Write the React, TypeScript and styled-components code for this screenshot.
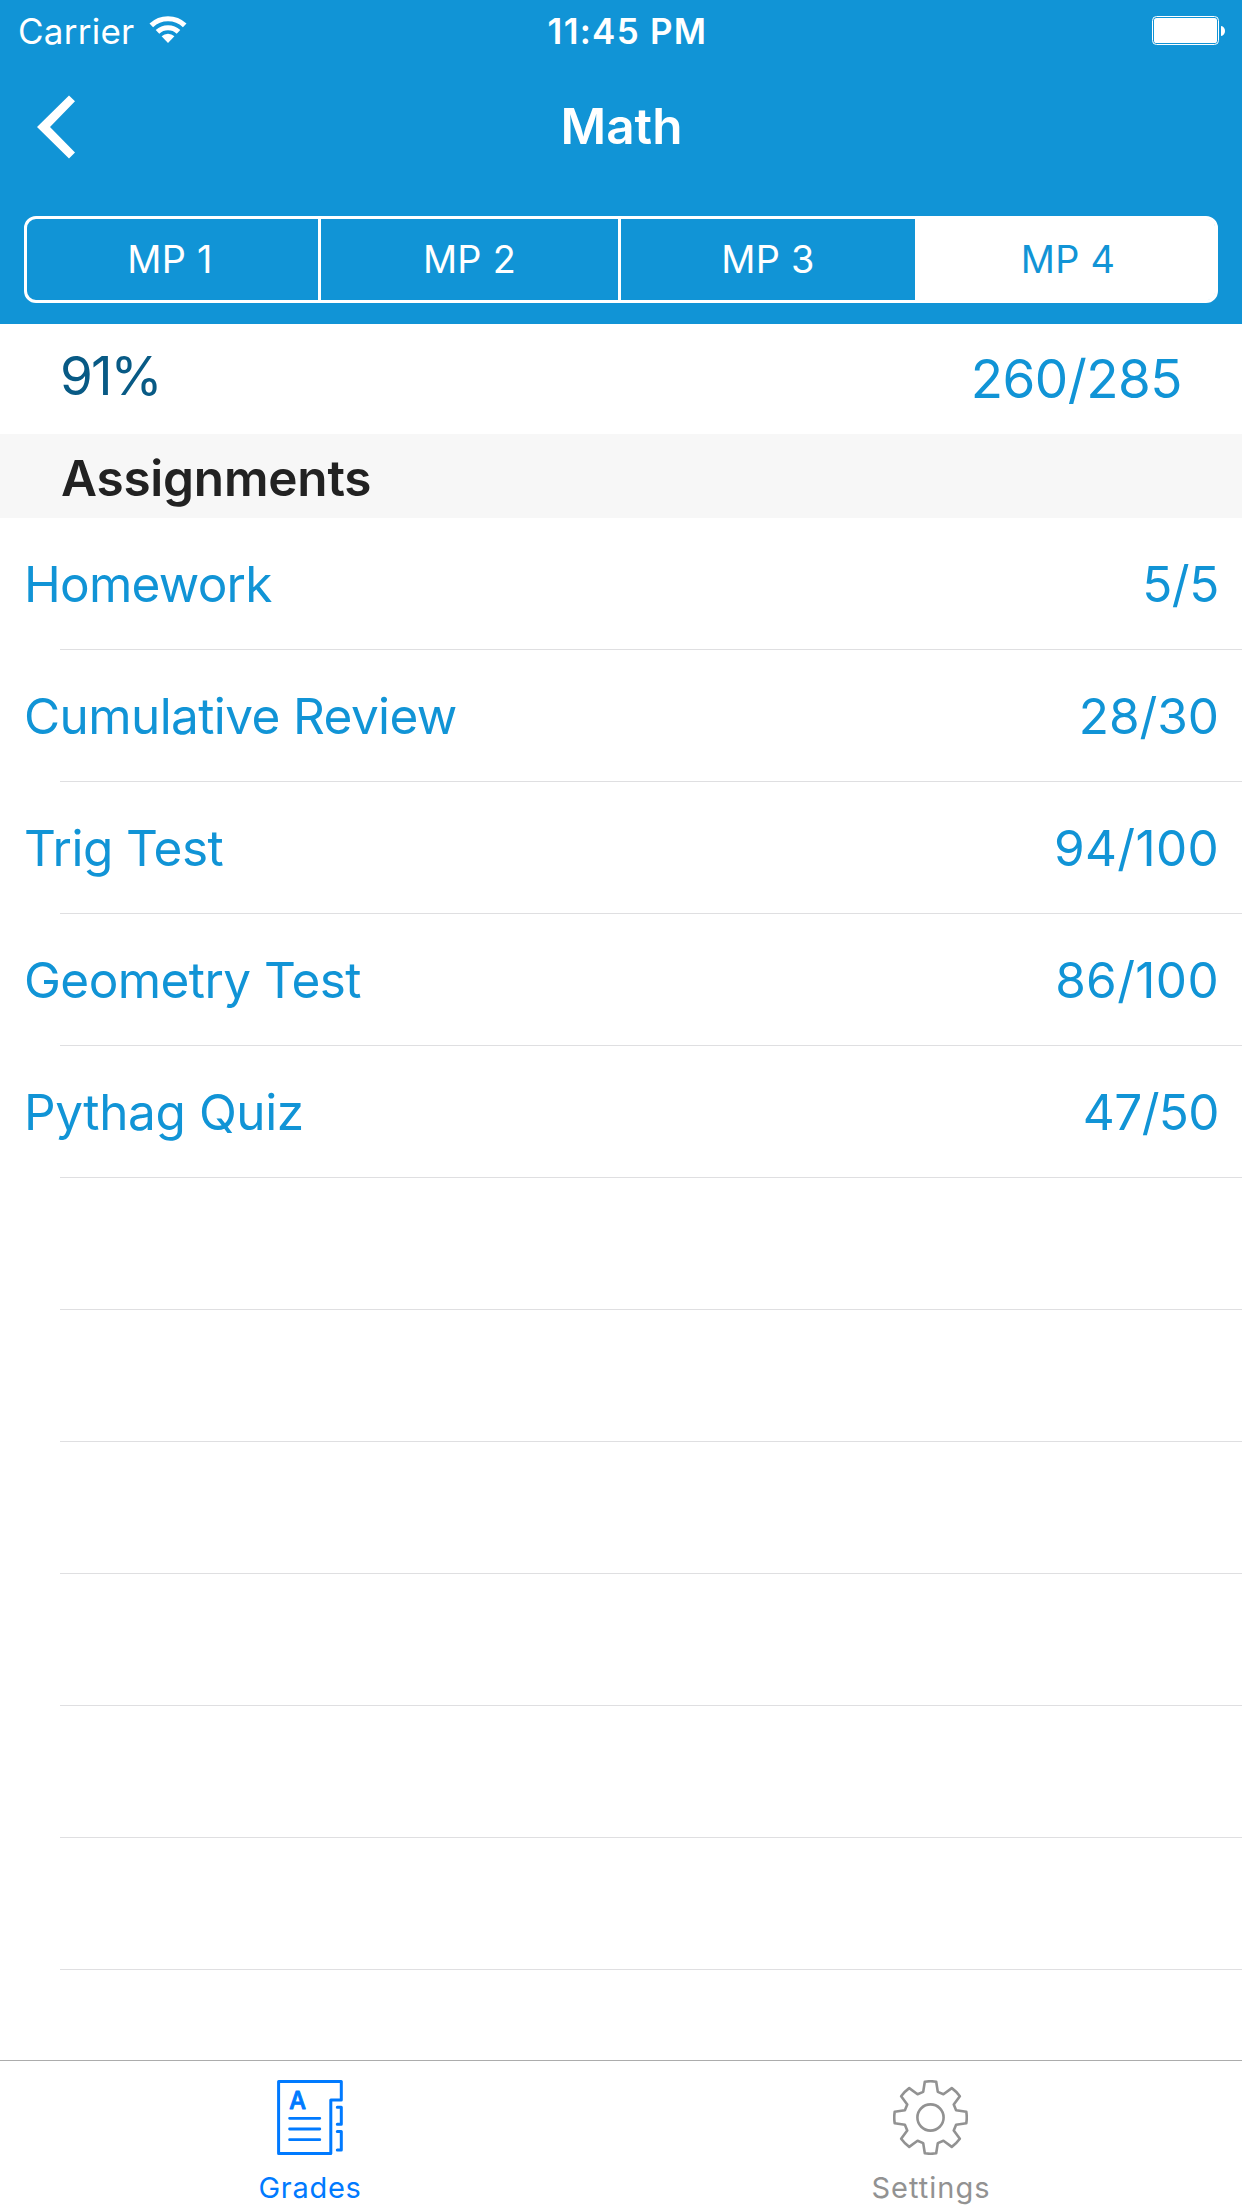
import React from "react";
import styled, { createGlobalStyle } from "styled-components";

const BLUE = "#1194d6";
const TINT = "#007aff";
const INACTIVE = "#929292";

const GlobalStyle = createGlobalStyle`
  *, *::before, *::after { box-sizing: border-box; }
  body { margin: 0; background: #fff; }
`;

const Screen = styled.div`
  display: flex;
  flex-direction: column;
  width: 1242px;
  height: 2208px;
  overflow: hidden;
  background: #fff;
  font-family: Inter, "Liberation Sans", sans-serif;
`;

const Text = styled.span<{ $track?: number }>`
  letter-spacing: ${(p) => p.$track ?? 0}px;
  white-space: nowrap;
`;

const Header = styled.header`
  height: 324px;
  flex: none;
  background: ${BLUE};
  color: #fff;
`;

const StatusBar = styled.div`
  display: grid;
  grid-template-columns: 1fr auto 1fr;
  align-items: center;
  height: 63px;
  padding: 0 17px 2px 18px;
  font-size: 35px;
`;

const Carrier = styled.div`
  display: flex;
  align-items: center;
  gap: 15px;

  svg { margin-bottom: 2px; }
`;

const Clock = styled.div`
  padding-left: 12px;
  font-weight: 600;
`;

const BatterySlot = styled.div`
  display: flex;
  justify-content: flex-end;
`;

const NavBar = styled.nav`
  display: grid;
  grid-template-columns: 1fr auto 1fr;
  align-items: center;
  height: 126px;
`;

const BackButton = styled.button`
  display: flex;
  justify-self: start;
  padding: 1px 0 0 37px;
  border: 0;
  background: none;
`;

const Title = styled.h1`
  margin: 0;
  padding-left: 1px;
  font-size: 49.5px;
  font-weight: 600;
`;

const Segments = styled.div`
  display: grid;
  grid-template-columns: 294px 300px 294px 300px;
  height: 87px;
  margin: 27px 24px 0;
  border: 3px solid #fff;
  border-radius: 12px;
`;

const Segment = styled.button<{ $active?: boolean; $divider?: boolean; $pad?: string }>`
  display: flex;
  align-items: center;
  justify-content: center;
  padding: ${(p) => p.$pad ?? "0 0 2px"};
  border: 0;
  border-right: ${(p) => (p.$divider ? "3px solid #fff" : "0")};
  border-radius: ${(p) => (p.$active ? "0 7px 7px 0" : "0")};
  background: ${(p) => (p.$active ? "#fff" : "transparent")};
  color: ${(p) => (p.$active ? BLUE : "#fff")};
  font-family: inherit;
  font-size: 37.8px;
`;

const Summary = styled.section`
  display: flex;
  align-items: center;
  justify-content: space-between;
  flex: none;
  height: 110px;
  padding: 0 60px 0 60px;
  color: ${BLUE};
  font-size: 53px;
`;

const Percent = styled.div`
  padding-bottom: 6px;
  color: #085a85;
`;

const SectionHeader = styled.h2`
  display: flex;
  align-items: center;
  flex: none;
  height: 84px;
  margin: 0;
  padding: 4px 61px 0;
  background: #f7f7f7;
  color: #222;
  font-size: 49.5px;
  font-weight: 600;
`;

const List = styled.ul`
  flex: 1;
  min-height: 0;
  margin: 0;
  padding: 0;
  overflow: hidden;
  list-style: none;
`;

const Row = styled.li`
  display: flex;
  flex-direction: column;
  height: 132px;
`;

const RowContent = styled.div`
  display: flex;
  flex: 1;
  align-items: center;
  justify-content: space-between;
  padding: 1px 23px 0 24px;
  color: ${BLUE};
  font-size: 49.5px;
`;

const Separator = styled.div`
  height: 1px;
  margin-left: 60px;
  background: #dfdfe1;
`;

const TabBar = styled.footer`
  display: grid;
  grid-template-columns: 1fr 1fr;
  flex: none;
  height: 148px;
  border-top: 1px solid #acacac;
  background: #fff;
`;

const Tab = styled.button<{ $color: string }>`
  display: flex;
  flex-direction: column;
  align-items: center;
  padding: 19px 2px 0 0;
  border: 0;
  background: none;
  color: ${(p) => p.$color};
  font-family: inherit;
  font-size: 29px;
  line-height: 33px;
`;

const TabLabel = styled.div`
  margin-top: 16px;
  padding-left: 1px;
`;

const WifiIcon = () => (
  <svg width="38" height="27" viewBox="0 0 38 27" fill="none">
    <path d="M2.3 9.4A24.3 24.3 0 0 1 35.7 9.4" stroke="#fff" strokeWidth="5.2" />
    <path d="M8.5 15.9A15.3 15.3 0 0 1 29.5 15.9" stroke="#fff" strokeWidth="5.2" />
    <path d="M12.6 20.3A9.3 9.3 0 0 1 25.4 20.3L19 27Z" fill="#fff" />
  </svg>
);

const BatteryIcon = () => (
  <svg width="73" height="29" viewBox="0 0 73 29" fill="none">
    <rect x="0.5" y="0.5" width="66" height="28" rx="4" stroke="#fff" />
    <rect x="2" y="2" width="63" height="25" rx="2.6" fill="#fff" />
    <path d="M69 10C71.6 10.4 73 12.4 73 15S71.6 19.6 69 20Z" fill="#fff" />
  </svg>
);

const BackIcon = () => (
  <svg width="39" height="64" viewBox="0 0 39 64">
    <path d="M32 0.5L38 6.3L13 32L38 57.5L32 63.5L0 32Z" fill="#fff" />
  </svg>
);

const GradesIcon = () => (
  <svg width="66" height="75" viewBox="0 0 66 75" fill="none" stroke="currentColor" strokeWidth="3" strokeLinecap="round" strokeLinejoin="round">
    <path d="M1.6 1.6H64.3V20H53.8V73.4H1.6Z" />
    <path d="M60.3 27.3H64.3V44.3H60.3M60.3 51.6H64.3V70H60.3" />
    <path d="M12.6 38.3H42.8M12.6 49H42.8M12.6 59.7H42.8" strokeWidth="2.8" />
    <text x="20.6" y="28.8" textAnchor="middle" fill="currentColor" strokeWidth="0.9" fontSize="23.6" fontWeight="500">A</text>
  </svg>
);

const rotate = (x: number, y: number, degrees: number) => {
  const a = (degrees * Math.PI) / 180;
  return `${(x * Math.cos(a) - y * Math.sin(a)).toFixed(2)} ${(x * Math.sin(a) + y * Math.cos(a)).toFixed(2)}`;
};

const gearOutline =
  Array.from({ length: 8 }, (_, i) => {
    const deg = i * 45;
    return `${i ? "L" : "M"}${rotate(-7.3, -25.6, deg)}L${rotate(-5.7, -35.8, deg)}Q${rotate(0, -36.7, deg)} ${rotate(5.7, -35.8, deg)}L${rotate(7.3, -25.6, deg)}`;
  }).join("") + "Z";

const SettingsIcon = () => (
  <svg width="75" height="75" viewBox="-37.5 -37.5 75 75" fill="none" stroke="currentColor" strokeWidth="2.6" strokeLinejoin="round">
    <path d={gearOutline} />
    <circle r="13.1" />
  </svg>
);

const segments = [
  { label: "MP 1", pad: "0 5px 2px 0", divider: true },
  { label: "MP 2", divider: true },
  { label: "MP 3" },
  { label: "MP 4", pad: "0 0 2px 6px", active: true },
];

const assignments = [
  { name: "Homework", track: -0.75, score: "5/5", scoreTrack: -0.4 },
  { name: "Cumulative Review", track: -0.6, score: "28/30", scoreTrack: -0.05 },
  { name: "Trig Test", track: -0.55, score: "94/100", scoreTrack: 0.3 },
  { name: "Geometry Test", track: -0.57, score: "86/100", scoreTrack: 0.35 },
  { name: "Pythag Quiz", track: -0.4, score: "47/50", scoreTrack: -0.6 },
];

const EMPTY_ROWS = 7;

export default function App() {
  return (
    <Screen>
      <GlobalStyle />
      <Header>
        <StatusBar>
          <Carrier>
            <Text $track={0.25}>Carrier</Text>
            <WifiIcon />
          </Carrier>
          <Clock>
            <Text $track={1.25}>11:45 PM</Text>
          </Clock>
          <BatterySlot>
            <BatteryIcon />
          </BatterySlot>
        </StatusBar>
        <NavBar>
          <BackButton aria-label="Back">
            <BackIcon />
          </BackButton>
          <Title>
            <Text>Math</Text>
          </Title>
        </NavBar>
        <Segments>
          {segments.map((s) => (
            <Segment key={s.label} $active={s.active} $divider={s.divider} $pad={s.pad}>
              <Text $track={0.3}>{s.label}</Text>
            </Segment>
          ))}
        </Segments>
      </Header>
      <Summary>
        <Percent>
          <Text $track={-1.9}>91%</Text>
        </Percent>
        <Text $track={-0.55}>260/285</Text>
      </Summary>
      <SectionHeader>
        <Text $track={-0.22}>Assignments</Text>
      </SectionHeader>
      <List>
        {assignments.map((a) => (
          <Row key={a.name}>
            <RowContent>
              <Text $track={a.track}>{a.name}</Text>
              <Text $track={a.scoreTrack}>{a.score}</Text>
            </RowContent>
            <Separator />
          </Row>
        ))}
        {Array.from({ length: EMPTY_ROWS }, (_, i) => (
          <Row key={i}>
            <RowContent />
            {i < EMPTY_ROWS - 1 && <Separator />}
          </Row>
        ))}
      </List>
      <TabBar>
        <Tab $color={TINT}>
          <GradesIcon />
          <TabLabel>
            <Text $track={0.7}>Grades</Text>
          </TabLabel>
        </Tab>
        <Tab $color={INACTIVE}>
          <SettingsIcon />
          <TabLabel>
            <Text $track={1}>Settings</Text>
          </TabLabel>
        </Tab>
      </TabBar>
    </Screen>
  );
}
